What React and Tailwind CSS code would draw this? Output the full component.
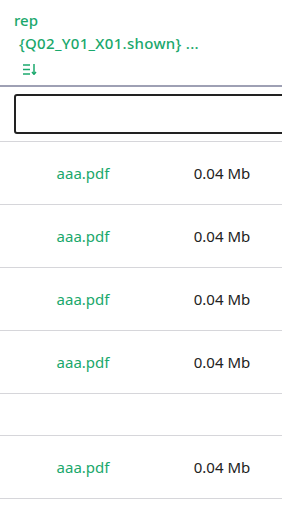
import React from 'react';

const rows = [
  { name: 'aaa.pdf', size: '0.04 Mb' },
  { name: 'aaa.pdf', size: '0.04 Mb' },
  { name: 'aaa.pdf', size: '0.04 Mb' },
  { name: 'aaa.pdf', size: '0.04 Mb' },
  null,
  { name: 'aaa.pdf', size: '0.04 Mb' },
];

function SortIcon() {
  return (
    <svg width="14" height="11" viewBox="0 0 14 11" fill="none" stroke="currentColor" strokeWidth="1.5">
      <line x1="0" y1="1" x2="7" y2="1" />
      <line x1="0" y1="5.5" x2="7" y2="5.5" />
      <line x1="0" y1="10" x2="7" y2="10" />
      <line x1="11" y1="0" x2="11" y2="10" />
      <polyline points="9,8 11,10.3 13,8" />
    </svg>
  );
}

export default function App() {
  return (
    <div className="w-[282px] min-h-[508px] overflow-hidden bg-white font-['Noto_Sans',sans-serif] text-[15px]">
      {/* column header */}
      <div className="border-b-2 border-[#9ea0b4] px-[14px] pt-[9px] pb-[9px] text-[#1aa86c] leading-[23px] font-medium">
        <div>rep</div>
        <div className="pl-[5px] whitespace-nowrap tracking-[0.3px]">{'{Q02_Y01_X01.shown}'} ...</div>
        <div className="pl-[9px] flex h-[21px] items-end pb-[1px]">
          <SortIcon />
        </div>
      </div>

      {/* filter */}
      <div className="border-b border-[#d6d6da] pl-[14px] pt-[7px] pb-[7px]">
        <input className="block w-[300px] h-[40px] rounded-[3px] border-2 border-[#222] outline-none" />
      </div>

      {/* rows */}
      {rows.map((r, i) => (
        <div key={i} className={`flex items-center border-b border-[#d6d6da] ${r ? 'h-[63px]' : 'h-[42px]'}`}>
          {r && (
            <>
              <div className="w-[166px] text-center text-[#1aa86c]">{r.name}</div>
              <div className="w-[112px] text-center text-[#222]">{r.size}</div>
            </>
          )}
        </div>
      ))}
    </div>
  );
}
